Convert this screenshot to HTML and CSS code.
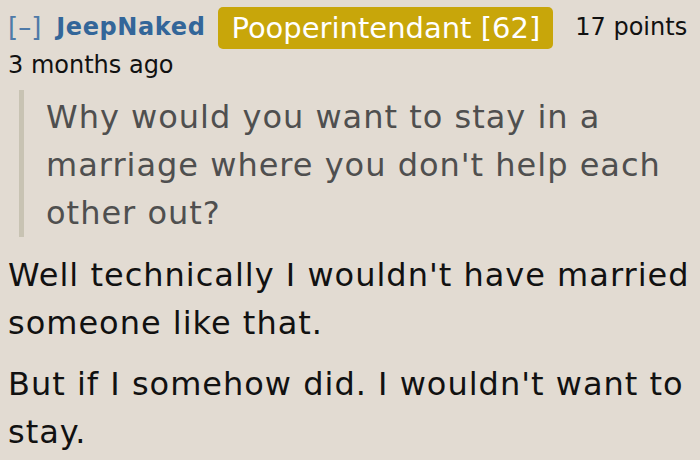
FILE: index.html
```html
<!DOCTYPE html>
<html>
<head>
<meta charset="utf-8">
<link rel="stylesheet" href="styles.css">
</head>
<body>
<div class="comment">
  <div class="tagline">
    <span class="expand">[–]</span>
    <span class="author">JeepNaked</span>
    <span class="flair">Pooperintendant [62]</span>
    <span class="score">17 points</span>
  </div>
  <div class="time">3 months ago</div>
  <blockquote class="quote">
    <p>Why would you want to stay in a marriage where you don't help each other out?</p>
  </blockquote>
  <p class="para">Well technically I wouldn't have married someone like that.</p>
  <p class="para">But if I somehow did. I wouldn't want to stay.</p>
</div>
</body>
</html>
```
FILE: styles.css
```css
html, body {
  margin: 0;
  padding: 0;
  background: #e2dbd2;
}
body {
  font-family: "DejaVu Sans", Verdana, sans-serif;
  color: #111;
  width: 700px;
  height: 460px;
  overflow: hidden;
}
.comment {
  padding: 0 0 0 8px;
  width: 692px;
}
.tagline {
  display: flex;
  align-items: flex-start;
  height: 49px;
  font-size: 24px;
  line-height: 28px;
  white-space: nowrap;
}
.expand,
.author,
.score {
  padding-top: 13px;
}
.expand {
  color: #4f7aa8;
  font-size: 26px;
  margin-right: 15px;
}
.author {
  color: #336699;
  font-weight: bold;
  letter-spacing: 0.6px;
  margin-right: 13px;
}
.flair {
  margin-top: 7px;
  background: #c8a60a;
  color: #fff;
  border-radius: 5px;
  padding: 0 13px;
  height: 42px;
  line-height: 42px;
  font-size: 29px;
  margin-right: 22px;
}
.score {
  color: #111;
}
.time {
  margin-top: 1px;
  font-size: 24px;
  line-height: 30px;
}
.quote {
  margin: 10px 0 0 11px;
  border-left: 5px solid #c8c3b3;
  padding: 3px 0 0 22px;
}
.quote p {
  margin: 0;
  color: #4f4f4f;
  font-size: 32px;
  line-height: 48px;
  letter-spacing: 1px;
}
.para {
  margin: 14px 0 0 0;
  font-size: 32px;
  line-height: 48px;
  letter-spacing: 1px;
}
.para + .para {
  margin-top: 13px;
}
```
